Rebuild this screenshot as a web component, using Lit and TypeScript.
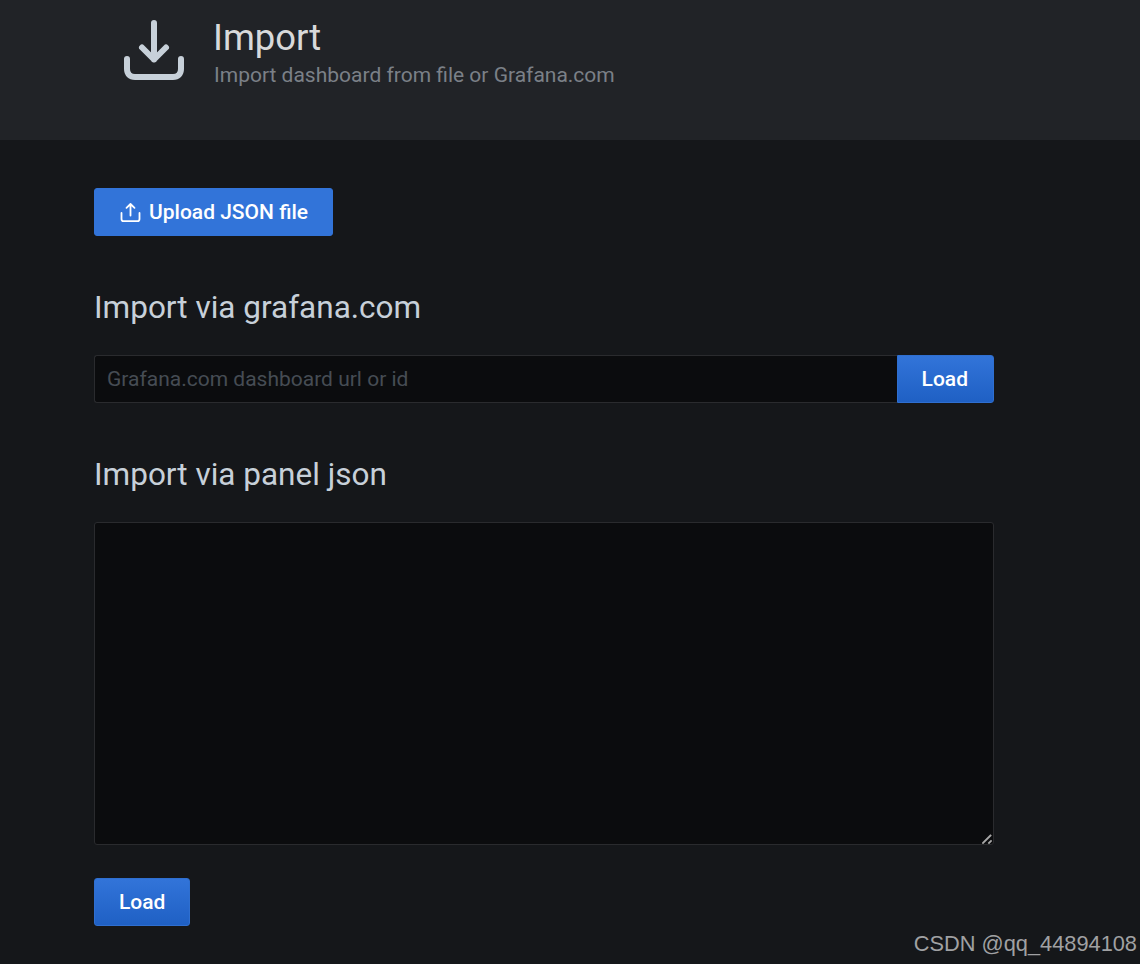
import { LitElement, html, css } from 'lit';
import { customElement } from 'lit/decorators.js';

@customElement('app-root')
export class AppRoot extends LitElement {
  static styles = css`
    :host {
      display: block;
      position: relative;
      height: 964px;
      overflow: hidden;
      background: #15171a;
      font-family: Roboto, sans-serif;
      color: #c7d0d9;
    }

    .header {
      height: 140px;
      box-sizing: border-box;
      background: #212327;
      padding: 18px 0 0 120px;
      display: flex;
      gap: 26px;
    }

    .header svg {
      width: 68px;
      height: 68px;
      flex: none;
    }

    .title {
      font-size: 36.400px;
      line-height: 40px;
      color: #d8d9da;
      margin-left: -1px;
    }

    .subtitle {
      font-size: 21px;
      line-height: 34px;
      color: #7b8087;
    }

    .content {
      padding: 48px 0 0 94px;
      width: 900px;
      display: flex;
      flex-direction: column;
      align-items: flex-start;
    }

    .btn {
      height: 48px;
      box-sizing: border-box;
      border: 1px solid #2f6fd0;
      border-radius: 3px;
      background: linear-gradient(180deg, #3274d9, #1f60c4);
      color: #fff;
      font: 500 21px Roboto, sans-serif;
      padding: 0 24px;
      display: flex;
      align-items: center;
    }

    .btn.upload {
      background: #3274d9;
      border-color: #3274d9;
      padding: 0 24px 0 25px;
      gap: 8px;
    }

    .btn.upload svg {
      width: 21px;
      height: 21px;
    }

    h2 {
      margin: 0;
      font-size: 31.500px;
      font-weight: 400;
      line-height: 36px;
      color: #c7d0d9;
    }

    .via-url {
      margin-top: 54px;
    }

    .row {
      display: flex;
      width: 900px;
      margin-top: 29px;
    }

    input {
      flex: 1;
      min-width: 0;
      height: 48px;
      box-sizing: border-box;
      background: #0b0c0e;
      border: 1px solid #2a2b2e;
      border-right: none;
      border-radius: 3px 0 0 3px;
      padding: 0 12px;
      color: #c7d0d9;
      font: 400 21px Roboto, sans-serif;
      outline: none;
    }

    input::placeholder {
      color: #464c54;
      opacity: 1;
    }

    .row .btn {
      border-radius: 0 3px 3px 0;
      padding: 0 25px 0 24px;
    }

    .via-json {
      margin-top: 54px;
    }

    .area {
      position: relative;
      width: 900px;
      height: 323px;
      margin-top: 29px;
    }

    textarea {
      display: block;
      width: 100%;
      height: 100%;
      box-sizing: border-box;
      background: #0b0c0e;
      border: 1px solid #2a2b2e;
      border-radius: 3px;
      color: #c7d0d9;
      outline: none;
      resize: none;
    }

    .grip {
      position: absolute;
      right: 2px;
      bottom: 1px;
      width: 10px;
      height: 10px;
    }

    .load {
      margin-top: 33px;
    }

    .watermark {
      position: absolute;
      right: 3px;
      bottom: 7px;
      font: 400 21.800px 'Liberation Sans', sans-serif;
      line-height: 26px;
      color: #a0a1a3;
    }
  `;

  render() {
    return html`
      <div class="header">
        <svg viewBox="0 0 68 68" fill="none" stroke="#c7d0d9" stroke-width="6" stroke-linecap="round" stroke-linejoin="round">
          <path d="M34 5V41.500M22 29.500L34 41.500L46 29.500" />
          <path d="M7 41V51C7 56 10 59 15 59H53C58 59 61 56 61 51V41" />
        </svg>
        <div>
          <div class="title">Import</div>
          <div class="subtitle">Import dashboard from file or Grafana.com</div>
        </div>
      </div>
      <div class="content">
        <button class="btn upload">
          <svg viewBox="0 0 21 21" fill="none" stroke="#fff" stroke-width="1.800" stroke-linecap="round" stroke-linejoin="round">
            <path d="M10.500 2V13.500M6.500 5.800L10.500 2L14.500 5.800" />
            <path d="M1.500 11V17C1.500 18.500 2.300 19.200 3.500 19.200H17.500C18.700 19.200 19.500 18.500 19.500 17V11" />
          </svg>
          Upload JSON file
        </button>
        <h2 class="via-url">Import via grafana.com</h2>
        <div class="row">
          <input placeholder="Grafana.com dashboard url or id" />
          <button class="btn">Load</button>
        </div>
        <h2 class="via-json">Import via panel json</h2>
        <div class="area">
          <textarea></textarea>
          <svg class="grip" viewBox="0 0 10 10" stroke="#a8a8a8" stroke-width="1.800" stroke-linecap="square">
            <path d="M1 9L8.500 1.500M7 9L9 7" />
          </svg>
        </div>
        <button class="btn load">Load</button>
      </div>
      <div class="watermark">CSDN @qq_44894108</div>
    `;
  }
}
